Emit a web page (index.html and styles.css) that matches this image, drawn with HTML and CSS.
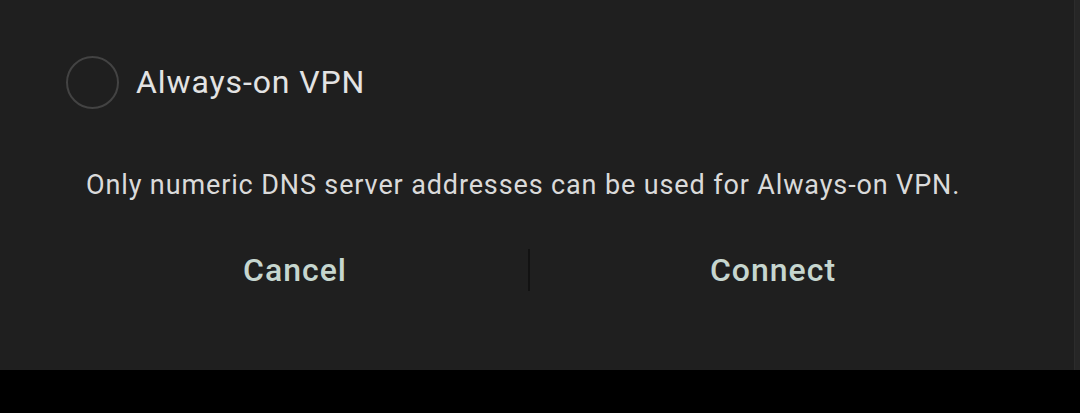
FILE: index.html
```html
<!DOCTYPE html>
<html>
<head>
<meta charset="utf-8">
<link rel="stylesheet" href="styles.css">
</head>
<body>
<div class="dialog">
  <div class="option">
    <span class="radio"></span>
    <span class="option-label">Always-on VPN</span>
  </div>
  <p class="message">Only numeric DNS server addresses can be used for Always-on VPN.</p>
  <div class="actions">
    <button class="btn btn-cancel">Cancel</button>
    <span class="divider"></span>
    <button class="btn btn-connect">Connect</button>
  </div>
</div>
</body>
</html>
```

FILE: styles.css
```css
html, body {
  margin: 0;
  padding: 0;
  background: #000;
  width: 1080px;
  height: 413px;
  overflow: hidden;
  font-family: Roboto, "Noto Sans", sans-serif;
}
.dialog {
  width: 1080px;
  height: 370px;
  background: #1f1f1f;
  border-right: 5px solid #262626;
  box-shadow: inset -1px 0 0 #2c2c2c;
  box-sizing: border-box;
  display: flex;
  flex-direction: column;
}
.option {
  display: flex;
  align-items: center;
  padding: 56px 0 0 66px;
  height: 52px;
}
.radio {
  width: 53px;
  height: 53px;
  border: 2px solid #434343;
  border-radius: 50%;
  box-sizing: border-box;
  flex: none;
}
.option-label {
  margin-left: 17px;
  font-size: 32px;
  color: #e3e3e3;
  letter-spacing: 0.9px;
}
.message {
  margin: 61px 0 0 86px;
  font-size: 27px;
  line-height: 32px;
  color: #dadada;
  letter-spacing: 0.87px;
  white-space: nowrap;
}
.actions {
  display: flex;
  align-items: center;
  margin-top: 48px;
  padding: 0 0 0 62px;
  height: 42px;
}
.btn {
  background: none;
  border: none;
  padding: 0;
  font-family: Roboto, "Noto Sans", sans-serif;
  font-weight: 500;
  font-size: 32px;
  letter-spacing: 1px;
  color: #c6d6cf;
  text-align: center;
}
.btn-cancel {
  width: 466px;
  flex: none;
}
.btn-connect {
  width: 486px;
  flex: none;
}
.divider {
  width: 2px;
  height: 42px;
  background: #121212;
  flex: none;
}
```
